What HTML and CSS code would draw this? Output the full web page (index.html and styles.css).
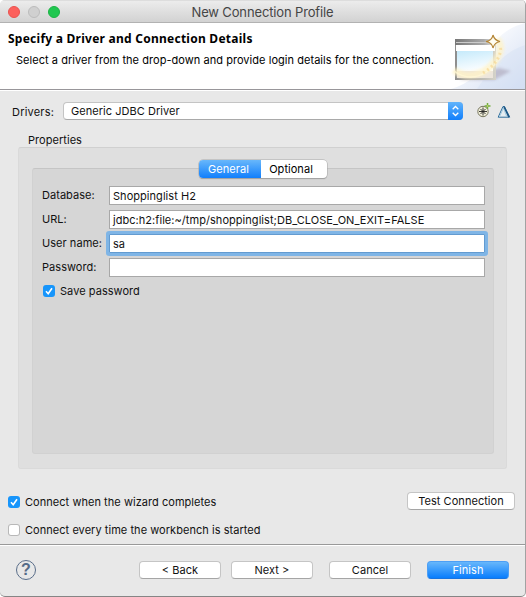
FILE: index.html
```
<!DOCTYPE html>
<html lang="en">
<head>
<meta charset="utf-8">
<title>New Connection Profile</title>
<link rel="stylesheet" href="styles.css">
</head>
<body>
<div class="window">
  <header class="titlebar">
    <div class="lights"><i class="light close"></i><i class="light minimise"></i><i class="light maximise"></i></div>
    <div class="title">New Connection Profile</div>
  </header>

  <section class="banner">
    <div class="banner-text">
      <h1>Specify a Driver and Connection Details</h1>
      <p>Select a driver from the drop-down and provide login details for the connection.</p>
    </div>
    <svg class="banner-art" width="96" height="66" viewBox="0 0 96 66">
      <defs>
        <linearGradient id="sweep" x1="0" y1="0" x2="1" y2="1"><stop offset="0.25" stop-color="#fff"/><stop offset="1" stop-color="#d3def3"/></linearGradient>
        <linearGradient id="bar" x1="0" x2="1"><stop offset="0" stop-color="#777"/><stop offset="0.7" stop-color="#aaa"/><stop offset="1" stop-color="#eee"/></linearGradient>
        <linearGradient id="sky" x1="0" y1="0" x2="0.3" y2="1"><stop offset="0" stop-color="#c5eafb"/><stop offset="1" stop-color="#fafdff"/></linearGradient>
        <linearGradient id="edge" x1="0" x2="1"><stop offset="0" stop-color="#8d8d8d"/><stop offset="1" stop-color="#d5d3ca"/></linearGradient>
        <filter id="soft" x="-30%" y="-30%" width="160%" height="160%"><feGaussianBlur stdDeviation="1.6"/></filter>
      </defs>
      <path d="M96 0C76 5 64 18 60 32C52 50 40 61 22 66H96Z" fill="url(#sweep)"/>
      <path d="M96 22C74 29 60 49 48 66H96Z" fill="#d3def3" opacity=".4"/>
      <g transform="translate(1 0)">
      <path d="M29 57L64 57L81 48L69 45Z" fill="#a9a2b5" opacity=".6" filter="url(#soft)"/>
      <rect x="25" y="17" width="41" height="40" fill="url(#edge)"/>
      <rect x="25" y="16" width="41" height="6" fill="url(#bar)"/>
      <rect x="26" y="19" width="38" height="1" fill="#ccc"/>
      <rect x="26" y="22" width="39" height="6" fill="#fff"/>
      <rect x="27" y="28" width="36" height="20" fill="url(#sky)"/>
      <rect x="27" y="48" width="36" height="7" fill="#ece5dc"/>
      <path d="M24 47C36 57 58 52 67 35Q74 24 67 16" fill="none" stroke="#fff3c6" stroke-width="7" opacity=".75" filter="url(#soft)"/>
      <path d="M24 48C38 59 58 54 67 38" fill="none" stroke="#fff8d5" stroke-width="1.500" opacity=".8"/>
      <path d="M53 50C65 43 73 31 70 22" fill="none" stroke="#f5d48a" stroke-width="3" stroke-dasharray="2 3" opacity=".6"/>
      <path d="M63 12Q62 17.500 56 18.500Q62 19.500 63 25Q64.500 19.500 70 18.500Q64.500 17.500 63 12Z" fill="#fffdf2" stroke="#b48535" stroke-width="1.200"/>
      </g>
    </svg>
  </section>

  <main class="content">
    <div class="driver-row">
      <div class="driver-label">Drivers:</div>
      <div class="select"><span>Generic JDBC Driver</span>
        <span class="stepper"><svg width="15" height="18" viewBox="0 0 15 18"><path d="M4.700 7.200L7.500 4.500L10.300 7.200M4.700 10.800L7.500 13.500L10.300 10.800" fill="none" stroke="#fff" stroke-width="1.300"/></svg></span>
      </div>
      <svg class="new-icon" width="16" height="16" viewBox="0 0 16 16">
        <circle cx="7" cy="9.500" r="5.200" fill="#f0eed9" stroke="#77765f"/>
        <path d="M7 5.500V13.500M3 9.500H11M4.500 7L9.500 12M9.500 7L4.500 12" stroke="#222" stroke-width=".9"/>
        <path d="M11.500 1V7M8.500 4H14.500" stroke="#74ad3d" stroke-width="1.500"/><path d="M11 3.500H12V4.500H11Z" fill="#f8ed78"/>
      </svg>
      <svg class="delta-icon" width="14" height="14" viewBox="0 0 14 14">
        <path d="M1.200 12.200L6 1.500H7.300L12.700 12.200Z" fill="#e5edf1" stroke="#2d6d9b"/><path d="M2.800 11L6.500 3L9.500 11" fill="none" stroke="#a2c9df"/><path d="M7 1.500L12 12.200" stroke="#1b5786" stroke-width="1.700"/>
      </svg>
    </div>

    <div class="group-title">Properties</div>
    <section class="group">
      <div class="panel">
        <div class="tabs"><div class="tab active">General</div><div class="tab">Optional</div></div>
        <div class="form">
          <div class="label">Database:</div><div class="field">Shoppinglist H2</div>
          <div class="label">URL:</div><div class="field">jdbc:h2:file:~/tmp/shoppinglist;DB_CLOSE_ON_EXIT=FALSE</div>
          <div class="label">User name:</div><div class="field focused">sa</div>
          <div class="label">Password:</div><div class="field"></div>
        </div>
        <div class="check save"><span class="box checked"><svg width="12" height="12" viewBox="0 0 12 12"><path d="M3 6.300L5.200 8.800L9 3.200" fill="none" stroke="#fff" stroke-width="1.600"/></svg></span><span>Save password</span></div>
      </div>
    </section>

    <div class="options">
      <div class="checks">
        <div class="check"><span class="box checked"><svg width="12" height="12" viewBox="0 0 12 12"><path d="M3 6.300L5.200 8.800L9 3.200" fill="none" stroke="#fff" stroke-width="1.600"/></svg></span><span>Connect when the wizard completes</span></div>
        <div class="check"><span class="box"></span><span>Connect every time the workbench is started</span></div>
      </div>
      <div class="button test">Test Connection</div>
    </div>
  </main>

  <footer class="footer">
    <div class="help">?</div>
    <div class="button back">&lt; Back</div>
    <div class="button next">Next &gt;</div>
    <div class="button cancel">Cancel</div>
    <div class="button primary">Finish</div>
  </footer>
</div>
</body>
</html>
```
FILE: styles.css
```
* { box-sizing: border-box; }
body { margin: 0; background: #fff; font: 11px/14px Inter, "Liberation Sans", sans-serif; color: #111; letter-spacing: .045px; white-space: nowrap; }
.window { width: 526px; height: 597px; display: flex; flex-direction: column; background: #e8e8e8; border-right: 1px solid #a2a2a2; border-bottom: 1px solid #858585; border-radius: 5px; overflow: hidden; }
.titlebar { height: 23px; flex: none; display: grid; grid-template-columns: 80px 1fr 80px; background: linear-gradient(#ececec, #d2d2d2); border-top: 1px solid #ddd; border-bottom: 1px solid #b2b2b2; }
.lights { display: flex; gap: 8px; padding: 5px 0 0 8px; }
.light { width: 12px; height: 12px; border-radius: 50%; border: 1px solid; }
.close { background: #fc615d; border-color: #e9534f; }
.minimise { background: #d0d0d0; border-color: #bcbcbc; }
.maximise { background: #20c750; border-color: #1bb344; }
.title { text-align: center; font-size: 13px; line-height: 22px; letter-spacing: -.14px; color: #454545; }
.banner { height: 67px; flex: none; display: flex; background: #fff; border-bottom: 1px solid #98969a; }
.banner-text { flex: 1; padding-top: 7px; }
.banner-art { flex: none; }
h1 { margin: 0 0 0 8px; font: bold 12px/17px "Noto Sans", sans-serif; color: #000; letter-spacing: .25px; width: 250px; }
p { margin: 6px 0 0 16px; width: 413px; color: #000; }
.content { height: 454px; flex: none; border-top: 1px solid #fff; }
.driver-row { display: flex; padding: 11px 0 0 12px; height: 43px; }
.driver-label { width: 51px; padding-top: 3px; letter-spacing: .2px; }
.select { width: 400px; height: 18px; display: flex; justify-content: space-between; padding-left: 7px; line-height: 16px; background: #fff; border: 1px solid #c4c4c4; border-bottom-color: #a9a9a9; border-radius: 4px; }
.stepper { width: 15px; height: 18px; margin: -1px -1px 0 0; background: linear-gradient(#62b4fb, #117ffc); border-radius: 0 4px 4px 0; }
svg { display: block; }
.new-icon { margin: 0 0 0 13px; }
.delta-icon { margin: 3px 0 0 5px; }
.group-title { height: 13px; line-height: 12px; padding-left: 28px; }
.group { width: 489px; height: 322px; margin-left: 18px; padding: 20px 13px 15px; background: #dfdfdf; border: 1px solid #dadada; border-top-color: #d0d0d0; border-radius: 3px; }
.panel { height: 286px; width: 462px; background: #d6d6d6; border: 1px solid #d1d1d1; border-top-color: #c5c5c5; border-radius: 3px; }
.tabs { width: 128px; height: 18px; margin: -9px 0 0 166px; display: flex; border-radius: 4px; box-shadow: 0 0 0 .5px #aaa, 0 1px 1px #999; background: #fff; }
.tab { flex: 1; text-align: center; line-height: 18px; color: #000; padding-right: 6px; }
.tab.active { flex: 0 0 62px; padding: 0 3px 0 0; color: #fff; background: linear-gradient(#68b7fb, #117ffc); border-radius: 4px 0 0 4px; }
.form { display: grid; grid-template-columns: 67px 376px; grid-auto-rows: 19px; row-gap: 5px; padding: 8px 0 0 9px; }
.label { line-height: 18px; }
.field { background: #fff; border: 1px solid #a8a8a8; padding-left: 3px; line-height: 19px; }
.focused { border-color: #639bd0; box-shadow: 0 0 0 3px #7fb5e6; border-radius: 1px; }
.check { display: flex; gap: 5px; height: 12px; line-height: 12px; }
.save { margin: 8px 0 0 10px; }
.box { width: 12px; height: 12px; border-radius: 3px; background: #fff; box-shadow: inset 0 0 0 1px #b8b8b8; }
.box.checked { background: #1795fb; box-shadow: none; }
.options { display: flex; justify-content: space-between; padding: 23px 10px 0 8px; }
.checks { display: grid; row-gap: 16px; padding-top: 4px; }
.button { height: 18px; background: #fff; border: 1px solid #c5c5c5; border-bottom-color: #a5a5a5; border-radius: 4px; text-align: center; line-height: 16px; width: 82px; }
.button.test { width: 108px; }
.footer { height: 52px; flex: none; display: flex; border-top: 1px solid #999; box-shadow: inset 0 1px #fff; padding: 16px 0 0 16px; }
.help { width: 20px; height: 20px; margin: -1px 103px 0 0; border: 1px solid #596d89; border-radius: 50%; text-align: center; font: bold 16px/18px "Liberation Sans", sans-serif; color: #566b87; letter-spacing: 0; }
.back { margin-right: 10px; }
.next, .cancel { margin-right: 16px; }
.button.primary { background: linear-gradient(#68b7fb, #087dfd); border-color: #4d9ff5; border-bottom-color: #1874e0; color: #fff; }
```
